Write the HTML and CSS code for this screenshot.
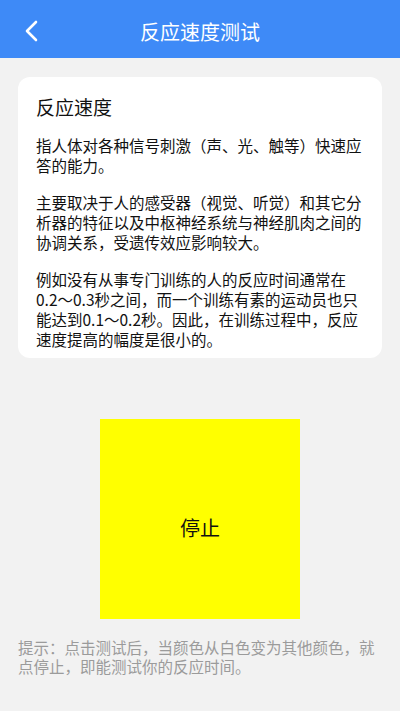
FILE: index.html
```html
<!DOCTYPE html>
<html lang="zh">
<head>
<meta charset="utf-8">
<link rel="stylesheet" href="styles.css">
</head>
<body>
<header class="bar">
  <span class="back">
    <svg width="16" height="22" viewBox="0 0 16 22"><path d="M13 2 L4 11 L13 20" fill="none" stroke="#fff" stroke-width="2.6" stroke-linecap="round" stroke-linejoin="round"/></svg>
  </span>
  <h1 class="bar-title">反应速度测试</h1>
</header>
<main class="content">
  <section class="card">
    <h2 class="card-title">反应速度</h2>
    <p class="para">指人体对各种信号刺激（声、光、触等）快速应答的能力。</p>
    <p class="para">主要取决于人的感受器（视觉、听觉）和其它分析器的特征以及中枢神经系统与神经肌肉之间的协调关系，受遗传效应影响较大。</p>
    <p class="para">例如没有从事专门训练的人的反应时间通常在0.2～0.3秒之间，而一个训练有素的运动员也只能达到0.1～0.2秒。因此，在训练过程中，反应速度提高的幅度是很小的。</p>
  </section>
  <div class="test-wrap">
    <div class="test-box">停止</div>
  </div>
  <p class="hint">提示：点击测试后，当颜色从白色变为其他颜色，就点停止，即能测试你的反应时间。</p>
</main>
</body>
</html>
```
FILE: styles.css
```css
* { box-sizing: border-box; }
html, body { margin: 0; padding: 0; }
body {
  width: 400px;
  height: 711px;
  background: #f2f2f2;
  font-family: "Noto Sans CJK SC", "Noto Sans", sans-serif;
  color: #111;
  overflow: hidden;
}
.bar {
  height: 58px;
  background: #3e8af7;
  display: flex;
  align-items: center;
  justify-content: center;
  position: relative;
}
.back {
  position: absolute;
  left: 23px;
  top: 20px;
  width: 16px;
  height: 22px;
  display: flex;
}
.bar-title {
  margin: 0;
  color: #fff;
  font-size: 20px;
  font-weight: normal;
  line-height: 26px;
  margin-top: 6px;
}
.content {
  padding: 19px 18px 0;
}
.card {
  background: #fff;
  border-radius: 12px;
  padding: 17px 18px 9px;
}
.card-title {
  margin: 0 0 15px;
  font-size: 19px;
  font-weight: normal;
  line-height: 26px;
}
.para {
  margin: 0 0 17px;
  font-size: 15.5px;
  line-height: 20px;
}
.para:last-child { margin-bottom: 0; }
.test-wrap {
  display: flex;
  justify-content: center;
  margin-top: 61px;
}
.test-box {
  width: 200px;
  height: 200px;
  background: #ffff00;
  display: flex;
  align-items: center;
  justify-content: center;
  font-size: 20px;
  padding-top: 16px;
  color: #111;
}
.hint {
  margin: 19px 0 0;
  font-size: 15.5px;
  line-height: 19px;
  color: #9b9b9b;
}
```
